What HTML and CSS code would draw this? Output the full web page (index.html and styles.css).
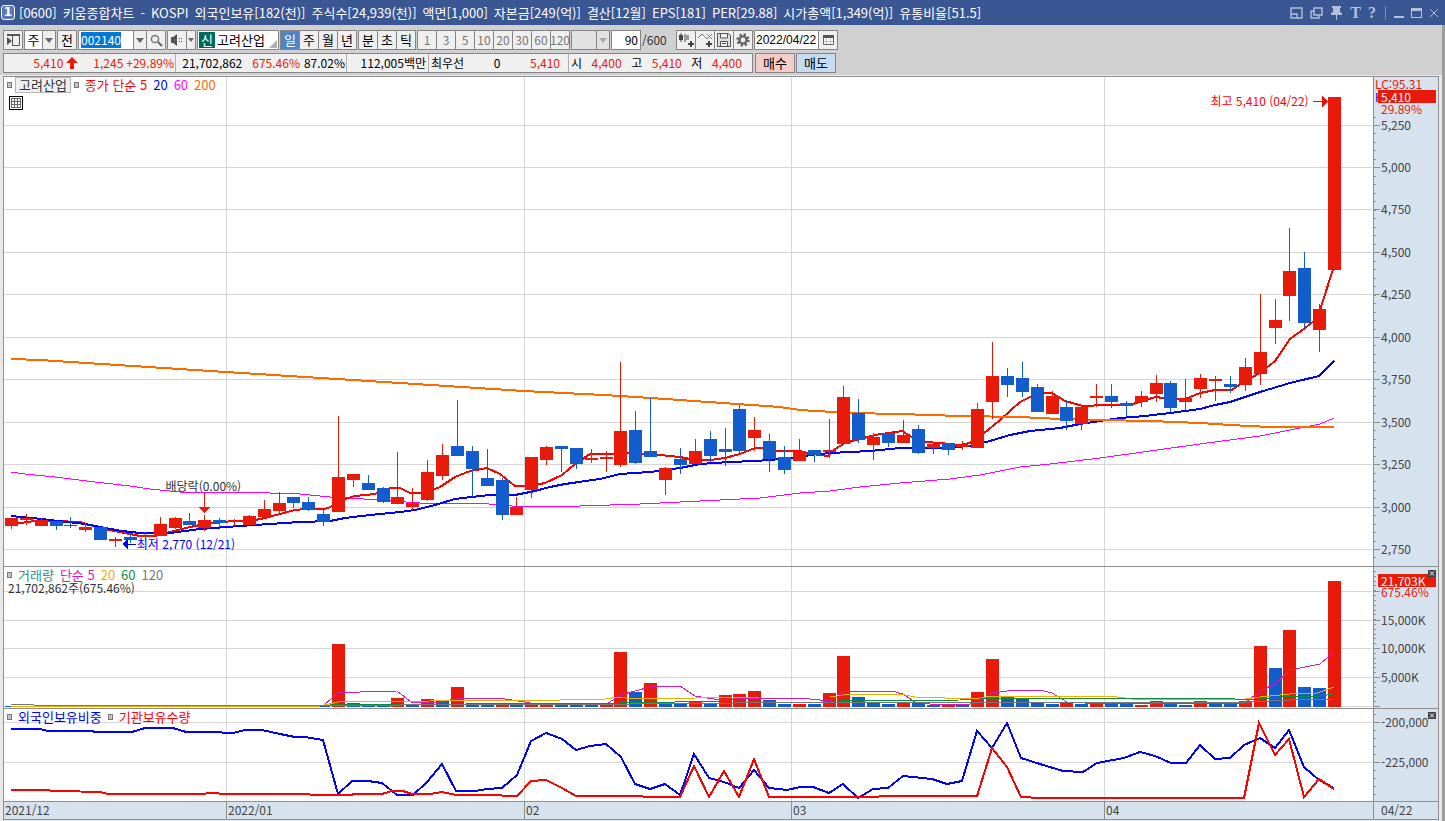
FILE: index.html
```html
<!DOCTYPE html>
<html lang="ko">
<head>
<meta charset="utf-8">
<title>[0600] 키움종합차트</title>
<link rel="stylesheet" href="styles.css">
</head>
<body>
<header class="titlebar">
  <span class="badge">1</span>
  <h1 class="title"><span>[0600]</span> <span>키움종합차트</span> <span>-</span> <span>KOSPI</span> <span>외국인보유[182(천)]</span> <span>주식수[24,939(천)]</span> <span>액면[1,000]</span> <span>자본금[249(억)]</span> <span>결산[12월]</span> <span>EPS[181]</span> <span>PER[29.88]</span> <span>시가총액[1,349(억)]</span> <span>유통비율[51.5]</span></h1>
  <div class="winctl">
    <button aria-label="축소"><svg width="13" height="12" viewBox="0 0 13 12"><path d="M1 1h11v10H7V7H1z M1 7v4h6" fill="none" stroke="currentColor" stroke-width="1.4"/></svg></button>
    <button aria-label="복제"><svg width="13" height="12" viewBox="0 0 13 12"><path d="M4 1h8v7H4z M4 4H1v7h8V8" fill="none" stroke="currentColor" stroke-width="1.4"/></svg></button>
    <button aria-label="고정"><svg width="13" height="14" viewBox="0 0 13 14"><path d="M2 0h9v2h-1v4l2 1v2H7v5H6V9H1V7l2-1V2H2z" fill="currentColor"/></svg></button>
    <button class="serif" aria-label="글꼴">T</button>
    <button class="serif" aria-label="도움말">?</button>
    <i class="bar"></i>
    <button aria-label="최소화"><svg width="11" height="12" viewBox="0 0 11 12"><path d="M1 9h10v2H1z" fill="currentColor"/></svg></button>
    <button aria-label="최대화"><svg width="11" height="12" viewBox="0 0 11 12"><path d="M0 1h11v10H0zM1 4v6h9V4z" fill="currentColor" fill-rule="evenodd"/></svg></button>
    <button aria-label="닫기"><svg width="11" height="12" viewBox="0 0 11 12"><path d="M1 2l8 8M9 2l-8 8" stroke="currentColor"/></svg></button>
  </div>
</header>
<main class="workspace">
  <section class="tools">
    <div class="toolbar">
      <div class="group"><button class="cell" aria-label="패널"><svg width="15" height="14" viewBox="0 0 15 14"><path d="M6.500 1v12M1 1.500h12.500v11H6" fill="none" stroke="#555"/><path d="M1 1h13v2H1zM1 4l5 4-5 4z" fill="#555"/></svg></button></div>
      <div class="group"><button class="cell plain">주</button><button class="cell arrow" aria-label="주 선택"></button></div>
      <div class="group"><button class="cell">전</button></div>
      <div class="group"><input class="code" id="code" value="002140" aria-label="종목코드"><button class="cell arrow" aria-label="종목 목록"></button><button class="cell" aria-label="검색"><svg width="13" height="13" viewBox="0 0 13 13"><circle cx="5" cy="5" r="3.6" fill="none" stroke="#777" stroke-width="1.5"/><path d="M8 8l4 4" stroke="#666" stroke-width="2"/></svg></button></div>
      <div class="group"><button class="cell" aria-label="소리"><svg width="14" height="12" viewBox="0 0 14 12"><path d="M1 3h2l4-3v12L3 9H1z" fill="#555"/><path d="M9 4h1v1H9zM11 4h1v1h-1zM9 7h1v1H9zM11 7h1v1h-1z" fill="#555"/></svg></button><button class="cell arrow slim" aria-label="소리 설정"></button></div>
      <div class="group stock"><b>신</b><span>고려산업</span></div>
      <div class="group"><button class="cell on">일</button><button class="cell">주</button><button class="cell">월</button><button class="cell">년</button></div>
      <div class="group"><button class="cell">분</button><button class="cell">초</button><button class="cell">틱</button></div>
      <div class="group num"><button class="cell">1</button><button class="cell">3</button><button class="cell">5</button><button class="cell">10</button><button class="cell">20</button><button class="cell">30</button><button class="cell">60</button><button class="cell">120</button></div>
      <div class="group off"><button class="cell wide" disabled aria-label="간격"></button><button class="cell arrow" disabled aria-label="간격 선택"></button></div>
      <div class="group count"><input id="count" value="90" aria-label="봉 개수"></div><label class="total" for="count">/600</label>
      <div class="group"><button class="cell" aria-label="봉 추가"><svg width="15" height="14" viewBox="0 0 15 14"><path d="M2 0v9M6 1v8" stroke="#444"/><path d="M0 2h4v5H0z" fill="#444"/><path d="M6 2h4v5H6z" fill="#999"/><path d="M9 11h6M12 8v6" stroke="#444" stroke-width="2"/></svg></button><button class="cell" aria-label="지표 추가"><svg width="15" height="14" viewBox="0 0 15 14"><path d="M0 5l4-4 5 5 5-5M9 1l5 5" fill="none" stroke="#777"/><path d="M8 11h6M11 8v6" stroke="#444" stroke-width="2"/></svg></button><button class="cell" aria-label="저장"><svg width="14" height="14" viewBox="0 0 14 14"><path d="M.5.5h11l2 2v11H.5z" fill="#ddd" stroke="#555"/><path d="M3.500 1v4h7V1M3.500 13V8.500h7V13M5 10.500h4" fill="#eee" stroke="#555"/></svg></button><button class="cell" aria-label="설정"><svg width="14" height="14" viewBox="0 0 14 14"><circle cx="7" cy="7" r="5.4" fill="none" stroke="#666" stroke-width="2.6" stroke-dasharray="2.1 2.14"/><circle cx="7" cy="7" r="3.6" fill="none" stroke="#666" stroke-width="2.4"/></svg></button></div>
      <div class="group date"><input value="2022/04/22" aria-label="날짜"><button class="cell" aria-label="달력"><svg width="13" height="12" viewBox="0 0 13 12"><path d="M1.500 1.500h10v9h-10z" fill="#fff" stroke="#666"/><path d="M1 1h11v3H1z" fill="#555"/><path d="M4.500 4v6M8.500 4v6M2 7.500h9" stroke="#bbb"/></svg></button></div>
    </div>
    <div class="quote">
      <div class="strip">
        <div class="q q1"><span class="up">5,410</span><svg width="12" height="12" viewBox="0 0 12 12"><path d="M6 0l6 6H8v6H4V6H0z" fill="#e81a0a"/></svg><span class="up chg">1,245</span><span class="up">+29.89%</span></div>
        <div class="q q2"><span>21,702,862</span><span class="up">675.46%</span><span>87.02%</span></div>
        <div class="q q3"><span>112,005백만</span></div>
        <div class="q q4"><span>최우선</span><span>0</span><span class="up">5,410</span></div>
        <div class="q q5"><span>시</span><span class="up">4,400</span><span>고</span><span class="up">5,410</span><span>저</span><span class="up">4,400</span></div>
      </div>
      <button class="order buy">매수</button><button class="order sell">매도</button>
    </div>
  </section>
  <section class="chart">
    <div class="panel" id="price">
      <div class="legend"><i></i><button class="name">고려산업</button><i></i><span class="c-red">종가 단순 5</span><span class="c-blue">20</span><span class="c-mag">60</span><span class="c-org">200</span></div>
      <button class="gridbtn" aria-label="표 보기"><svg width="10" height="10" viewBox="0 0 10 10"><path d="M0 .5h10M0 3.500h10M0 6.500h10M0 9.500h10M.5 0v10M3.500 0v10M6.500 0v10M9.500 0v10" stroke="#666"/></svg></button>
      <span class="note high">최고 5,410 (04/22)</span>
      <span class="note div">배당락(0.00%)</span>
      <span class="note low">최저 2,770 (12/21)</span>
    </div>
    <div class="axis" id="priceAxis"><span class="lc">LC:95.31</span><span class="hh">H</span><span class="tag">5,410</span><span class="rate">29.89%</span></div>
    <div class="panel line" id="volume">
      <div class="legend"><i></i><span class="c-teal">거래량</span><span class="c-pink">단순 5</span><span class="c-yel">20</span><span class="c-grn">60</span><span class="c-gry">120</span></div>
      <p class="sub">21,702,862주(675.46%)</p>
    </div>
    <div class="axis line" id="volumeAxis"><button class="x" aria-label="거래량 닫기"><svg width="8" height="7" viewBox="0 0 8 7"><path d="M2 1.500l4 4M6 1.500l-4 4" stroke="#fff"/></svg></button><span class="tag vtag">21,703K</span><span class="rate vrate">675.46%</span></div>
    <div class="panel line" id="holding">
      <div class="legend"><i></i><span class="c-blue">외국인보유비중</span><i></i><span class="c-red">기관보유수량</span></div>
    </div>
    <div class="axis line" id="holdingAxis"><button class="x" aria-label="보유 닫기"><svg width="8" height="7" viewBox="0 0 8 7"><path d="M2 1.500l4 4M6 1.500l-4 4" stroke="#fff"/></svg></button></div>
    <div class="dates line" id="dates"></div>
    <div class="today line">04/22</div>
  </section>
</main>
<script src="chart.js"></script>
</body>
</html>
```

FILE: styles.css
```css
* { box-sizing: border-box; }
body {
  margin: 0; height: 100vh; overflow: hidden;
  display: flex; flex-direction: column;
  font: 13px/16px "Noto Sans CJK KR", sans-serif;
  color: #000; background: #e8e8e8;
}
button, input { font: inherit; color: inherit; margin: 0; padding: 0; border: 0; border-radius: 0; outline: 0; }
button { background: none; }

.titlebar { height: 25px; flex: none; background: #3a5693; color: #fff; display: flex; align-items: center; padding: 0 5px 0 1px; }
.badge { width: 14px; height: 15px; border: 1px solid #fff; border-radius: 3px; background: #5c78b6; font: bold 12px/13px "DejaVu Sans", sans-serif; text-align: center; }
.title { margin: 0 0 0 4px; font: inherit; line-height: 20px; flex: 1; white-space: nowrap; display: flex; gap: 6px; }
.winctl { display: flex; align-items: center; gap: 7px; color: #b4c0da; }
.winctl button { height: 16px; display: flex; align-items: center; justify-content: center; }
.winctl .serif { font: bold 16px/16px "Liberation Serif", serif; }
.bar { width: 1px; height: 14px; background: #7f8fae; margin: 0 0 0 2px; }

.workspace { flex: 1; min-height: 0; display: flex; flex-direction: column; border-right: 3px solid #9c9c9c; padding-bottom: 1px; }
.tools { background: #d0d0d0; padding: 5px 3px 2px; display: flex; flex-direction: column; gap: 3px; margin-bottom: 1px; }
.toolbar { display: flex; gap: 1px; height: 20px; }
.group { display: flex; height: 20px; border: 1px solid #858585; background: #858585; gap: 1px; }
.cell { width: 18px; background: #efefef; display: flex; align-items: center; justify-content: center; white-space: nowrap; }
.plain { background: #fff; width: 17px; }
.arrow { width: 12px; }
.arrow::after { content: ""; border: 4px solid transparent; border-top: 5px solid #666; border-bottom: 0; }
.slim { width: 8px; }
.slim::after { border-width: 4px 3px 0; }
.on { background: #4f84c6; color: #fff; }
.code { width: 54px; padding: 0 2px; background: #fff; font-size: 12px; }
.code::selection { background: #0078d7; color: #fff; }
.stock { background: #fff; width: 82px; position: relative; gap: 2px; line-height: 18px; }
.stock b { margin: 1px 0 1px 1px; width: 16px; line-height: 16px; text-align: center; font-weight: normal; color: #fff; background: #00685e; }
.stock::after { content: ""; position: absolute; right: 1px; bottom: 1px; border-left: 8px solid transparent; border-bottom: 8px solid #b0b0b0; }
.num { color: #777; font-size: 12px; }
.off .cell { background: #e2e2e2; }
.off .wide { width: 24px; }
.off .arrow::after { border-top-color: #aaa; }
.count input { width: 28px; text-align: right; background: #fff; padding-right: 2px; font-size: 12px; }
.total { line-height: 20px; color: #333; width: 33px; font-size: 12px; }
.date input { width: 63px; background: #fff; padding-left: 1px; font: 12px "Liberation Sans", sans-serif; }

.quote { display: flex; gap: 2px; height: 20px; }
.strip { display: flex; width: 750px; border: 1px solid #858585; background: #f0f0f0; line-height: 18px; font-size: 12px; }
.q { display: flex; align-items: center; border-right: 1px solid #b0b0b0; white-space: nowrap; }
.q:last-child { border: 0; }
.up { color: #e81a0a; }
.q1 { width: 172px; padding-right: 1px; justify-content: flex-end; gap: 3px; }
.chg { margin-left: 12px; }
.q2 { width: 171px; justify-content: flex-end; gap: 4px; padding-right: 1px; }
.q2 span:first-child { margin-right: 6px; }
.q3 { width: 82px; justify-content: flex-end; padding-right: 2px; }
.q4 { width: 140px; justify-content: space-between; padding: 0 8px 0 2px; }
.q5 { flex: 1; justify-content: space-between; padding: 0 10px 0 2px; }
.order { width: 40px; border: 1px solid #858585; }
.buy { background: #f5cdc8; }
.sell { background: #c5dcf2; margin-left: -1px; }

.chart {
  flex: 1; min-height: 0; margin: 0 3px; border: 1px solid #8f8f8f;
  display: grid; grid-template-columns: minmax(0, 1fr) 65px;
  grid-template-rows: 489fr 142fr 93fr 18px; background: #fff;
}
.panel, .axis, .dates { position: relative; min-height: 0; overflow: hidden; }
.axis, .dates, .today { background: #d7e2ef; color: #444; font-size: 12px; }
.axis, .today { border-left: 1px solid #8f8f8f; }
.line { border-top: 1px solid #8f8f8f; }
.plot { position: absolute; left: 0; top: 0; width: 100%; height: 100%; display: block; }
.legend { position: relative; display: flex; align-items: center; gap: 6px; padding-left: 3px; height: 16px; white-space: nowrap; }
.legend i { width: 5px; height: 6px; border: 1px solid #777; background: #c4c4c4; }
.name { border: 1px solid #b5b5b5; background: #f0f0f0; height: 16px; line-height: 14px; padding: 0 3px; margin: 0 -3px; color: #333; }
.gridbtn { position: relative; display: flex; margin: 3px 0 0 5px; width: 14px; height: 14px; border: 1px solid #000; background: #fff; align-items: center; justify-content: center; }
.sub { position: relative; margin: -3px 0 0 4px; color: #333; font-size: 12px; }
.c-red { color: #f00; } .c-blue { color: #00f; } .c-mag { color: #f0f; } .c-org { color: #ff6a00; }
.c-teal { color: #2f8f8f; } .c-pink { color: #d81bb0; } .c-yel { color: #f2ae00; } .c-grn { color: #0a8f3c; } .c-gry { color: #777; }
.note { position: absolute; white-space: nowrap; transform: translateY(-50%); font-size: 12px; }
.high { right: 4.7%; top: 4.9%; color: #f00; }
.div { left: 11.8%; top: 83.6%; color: #333; }
.low { left: 9.7%; top: 95.4%; color: #00f; }

.lab { position: absolute; left: 7px; transform: translateY(-50%); }
.lc, .hh, .rate, .tag { position: absolute; left: 1px; }
.lc { top: -1px; color: #e81a0a; }
.hh { top: 12px; color: #00c; }
.tag { left: 4px; top: 13px; width: 58px; height: 13px; line-height: 13px; padding-left: 3px; background: #e81a0a; color: #fff; z-index: 1; }
.rate { left: 7px; top: 24px; color: #e81a0a; }
.vtag { top: 7px; }
.vrate { top: 17px; }
.x { position: absolute; right: 2px; top: 3px; width: 8px; height: 7px; background: #444; z-index: 2; display: flex; }
.month { position: absolute; top: 0; height: 100%; border-left: 1px solid #8f8f8f; padding-left: 1px; }
.month:first-child { border: 0; }
.today { padding-left: 7px; }
```

FILE: chart.js
```js
const LEFT = 4, WIDTH = 1369, FIRST = 11.5, STEP = 1323 / 89;
const UP = '#e81a0a', DOWN = '#125ccb';
const cx = i => Math.floor(FIRST + i * STEP) + 0.5;

// colour, high, body top, body bottom, low
const candles = `R518,518,526,529 R514,518,520,525 R518,520,526,526 B521,521,526,530 B517,525,526,528 R523,527,530,532
B527,527,540,540 R537,539,541,547 B534,537,540,543 R532,536,537,541 R517,524,536,536 R517,518,528,529 B513,521,525,525
R515,520,528,531 B518,520,523,527 R519,521,522,526 R515,516,525,525 R500,509,517,517 R492,503,511,515 B497,497,503,508
B497,502,510,511 B510,514,522,526 R416,477,512,512 R474,474,480,487 B475,483,490,490 B487,488,502,503 R452,497,504,504
R488,503,507,510 R460,472,500,501 R444,455,476,480 B400,446,456,456 B446,451,469,497 B449,478,486,486 B478,480,515,520
R497,507,515,515 R457,457,490,498 R446,447,460,465 B446,446,449,472 B448,448,464,469 R449,458,460,463 R451,457,459,472
R362,431,465,467 B411,430,463,464 B398,451,457,457 R467,468,480,495 B448,459,465,474 R439,451,464,464 B431,439,456,462
B428,449,452,466 B405,409,451,454 R417,430,438,451 B434,441,459,472 B446,457,470,474 R439,451,461,461 B450,450,455,462
R419,450,452,458 R386,397,444,444 B399,413,440,443 R433,437,445,460 B433,433,443,447 R420,435,443,443 B425,429,453,454
R444,444,448,454 B443,443,450,455 R441,445,447,450 R403,409,448,448 R342,376,402,419 B368,376,385,397 B362,378,392,397
B384,387,412,412 R391,396,414,414 B400,407,421,430 R407,407,424,430 R384,396,398,407 B384,396,402,408 B401,403,406,416
R391,396,402,407 R375,383,394,402 B381,383,408,412 R379,398,402,410 R374,378,389,398 R376,379,381,401 B376,384,387,393
R358,367,385,391 R294,352,374,385 R299,320,328,344 R228,271,296,321 B252,268,323,327 R304,309,330,352 R97,97,270,270`.split(/\s+/);

const volumes = `B706 B706 B706 B706 B706 B706 B706 B706 B706 B706 B706 B706 B706 B706 B706 B706 B706 B706 B706 B706 B706 B706
R644 B703 B705 B705 R698 B705 R699 B700 R687 B703 B703 R703 B705 R703 R703 B705 B705 B705 R705 R652 B692 R683 B704 B704
R701 B704 R695 R694 R691 B700 B704 R704 B704 R693 R656 B697 B702 B704 R703 B703 B705 R705 B705 R692 R659 B697 B699 B703
B704 R703 B704 R703 B704 B704 R705 R701 B704 B705 R701 B704 B704 R701 R646 B668 R630 B687 B688 R581`.split(/\s+/);

const lines = {
  ma60: '11,472 25,474 55,477 95,482 130,486 150,489 180,492 240,492 300,494 330,497 350,498 392,501 420,503 478,503 500,505 523,507 540,506 580,506 640,504 700,501 760,498 800,493 830,491 860,487 900,483 950,479 980,475 1000,471 1020,467 1050,464 1100,458 1150,451 1200,444 1260,436 1290,430 1310,426 1320,424 1334,418',
  ma5: '11,524 20,523 35,521 55,521 80,522 100,528 125,533 140,536 155,536 170,532 190,527 205,524 215,523 232,521 250,521 265,518 280,514 295,510 305,509 325,509 335,505 345,499 355,496 375,494 390,488 400,488 410,493 425,493 440,487 455,477 470,471 487,468 500,474 515,486 530,486 545,483 562,475 575,464 590,454 610,454 625,453 660,455 680,457 695,460 710,460 725,458 740,454 755,448 765,448 778,451 800,451 812,454 828,456 835,449 845,443 860,439 875,435 902,431 912,437 925,442 940,443 960,445 970,443 983,434 1000,420 1020,402 1030,397 1042,393 1052,393 1065,401 1083,406 1105,405 1130,405 1145,400 1156,397 1170,399 1185,399 1200,393 1215,390 1232,390 1245,381 1260,373 1275,361 1290,339 1305,328 1315,320 1320,310 1334,266',
  ma20: '11,516 32,518 50,520 85,524 105,528 122,531 140,533 170,533 200,529 240,526 270,524 300,522 330,521 345,518 370,515 400,512 415,510 435,505 455,499 480,496 490,495 515,495 535,491 550,487 565,484 600,479 620,474 650,472 680,468 700,464 730,462 755,461 795,458 810,455 830,453 870,451 900,448 940,448 970,446 990,441 1010,435 1030,431 1060,428 1080,424 1100,421 1120,418 1145,416 1170,413 1200,409 1215,405 1230,402 1260,392 1290,383 1319,376 1334,361',
  ma200: '11,359 40,360 226,372 400,383 524,391 604,395 651,398 780,407 800,410 850,413 900,414 960,416 1020,417 1060,419 1100,420 1150,421 1200,423 1230,425 1270,427 1334,427',
  v120: '11,704 33,704 35,706 400,705 630,704 840,702 1250,702 1290,700 1334,699',
  v20: '11,706 320,706 338,702 430,701 455,700 560,700 570,699 605,699 620,697 632,699 760,697 830,697 850,694 900,694 915,697 945,698 980,698 992,696 1040,696 1117,697 1140,700 1245,699 1260,697 1290,694 1317,693 1334,687',
  v60: '330,705 620,703 730,701 840,701 960,700 1005,698 1220,698 1250,700 1290,696 1320,696 1334,694',
  v5: '324,705 338,693 360,692 397,691 411,702 440,702 460,698 490,698 505,699 525,702 535,704 607,704 620,695 650,687 680,686 695,696 720,700 750,698 800,698 830,701 843,692 855,691 892,691 903,694 915,702 930,704 970,704 980,702 992,693 1015,690 1040,690 1052,693 1067,702 1085,703 1245,703 1260,691 1275,684 1290,670 1305,667 1320,664 1334,652',
  foreign: '11,729 40,729 48,731 92,731 95,732 132,732 145,728 173,728 186,732 210,732 233,733 245,730 262,730 280,734 295,737 305,737 323,740 338,794 352,781 368,781 382,783 397,795 413,795 427,782 442,764 456,791 475,791 487,789 502,788 517,775 531,741 546,733 562,739 576,750 590,746 606,744 621,757 635,784 650,789 665,784 680,795 694,754 709,778 724,782 739,788 754,770 769,788 787,790 800,787 813,787 829,793 843,784 858,798 873,789 888,788 903,776 932,779 947,784 962,781 977,731 992,748 1007,723 1021,758 1040,764 1063,771 1083,772 1097,763 1124,758 1140,752 1155,756 1171,763 1186,763 1200,745 1215,759 1230,758 1244,745 1260,738 1275,748 1289,730 1304,767 1319,780 1334,788',
  institution: '11,790 40,790 60,791 100,792 108,794 200,794 212,793 225,794 308,794 312,795 350,795 355,794 382,794 392,791 403,791 412,794 430,794 442,792 456,795 487,795 517,796 531,781 546,780 562,788 576,796 605,796 680,797 694,766 709,797 724,771 739,797 754,759 769,797 858,797 900,796 977,796 992,748 1007,767 1021,797 1040,798 1244,798 1259,723 1275,755 1289,739 1304,797 1319,779 1334,789'
};

const rect = (x, y, w, h, fill) => `<rect x="${x}" y="${y}" width="${w}" height="${h}" fill="${fill}"/>`;
const poly = (key, colour, width) => `<polyline points="${lines[key]}" fill="none" stroke="${colour}" stroke-width="${width}" vector-effect="non-scaling-stroke"/>`;
const months = [[226, '2022/01'], [524, '02'], [791, '03'], [1104, '04']];

function plot(id, left, top, width, height, shapes) {
  document.getElementById(id).insertAdjacentHTML('afterbegin',
    `<svg class="plot" viewBox="${left} ${top} ${width} ${height}" preserveAspectRatio="none" shape-rendering="crispEdges">${shapes}</svg>`);
}
function grid(top, height, rows) {
  return months.map(m => rect(m[0], top, 1, height, '#d6d6d6')).join('') +
    rows.map(y => rect(LEFT, y, WIDTH - 1, 1, '#d6d6d6')).join('');
}
function axis(id, top, height, rows, minor) {
  const ticks = minor.map(y => rect(1374, Math.round(y), 2, 1, '#8f8f8f')).join('') +
    rows.map(r => rect(1374, r[0], 6, 1, '#8f8f8f')).join('');
  plot(id, 1374, top, 64, height, ticks);
  document.getElementById(id).insertAdjacentHTML('beforeend', rows.filter(r => r[1]).map(r =>
    `<span class="lab" style="top:${(r[0] - top) / height * 100}%">${r[1]}</span>`).join(''));
}
const range = (from, to, step) => { const out = []; for (let y = from; y < to; y += step) out.push(y); return out; };

const priceRows = [125, 167, 209, 252, 294, 337, 379, 422, 464, 507, 549];
plot('price', LEFT, 77, WIDTH, 489, grid(77, 489, priceRows) +
  poly('ma60', '#f0f', 1) + poly('ma5', '#f00', 2) + poly('ma20', '#00f', 2) + poly('ma200', '#ff6a00', 2) +
  candles.map((c, i) => {
    const colour = c[0] === 'R' ? UP : DOWN, [h, t, b, l] = c.slice(1).split(',').map(Number), x = cx(i) - 0.5;
    return rect(x, h, 1, l - h, colour) + rect(x - 6, t, 13, b - t, colour);
  }).join('') +
  '<path d="M1313 101h9v-5l6 5-6 6v-5h-9z" fill="#f00"/>' +
  '<path d="M204 493h1v14h5l-5.500 6-5.500-6h5z" fill="#e81a0a"/>' +
  '<path d="M122 544l6-5v5h8v1h-8v5z" fill="#00f"/>');
axis('priceAxis', 77, 489, priceRows.map((y, i) => [y, (5250 - i * 250).toLocaleString('en-US')]), range(116.5, 566, 8.48));

const volumeRows = [591, 620, 648, 677, 706];
plot('volume', LEFT, 567, WIDTH, 141, grid(567, 141, volumeRows) +
  volumes.map((v, i) => rect(cx(i) - 6.5, +v.slice(1), 13, 707 - v.slice(1), v[0] === 'R' ? UP : DOWN)).join('') +
  poly('v5', '#d81bb0', 1) + poly('v20', '#f2ae00', 1) + poly('v60', '#0a8f3c', 1) + poly('v120', '#777', 1));
axis('volumeAxis', 567, 141, volumeRows.map((y, i) => [y, ['', '15,000K', '10,000K', '5,000K', ''][i]]), range(571, 706, 4.82));

plot('holding', LEFT, 709, WIDTH, 92, grid(709, 92, [722, 762]) + poly('foreign', '#00f', 2) + poly('institution', '#f00', 2));
axis('holdingAxis', 709, 92, [[722, '-200,000'], [762, '-225,000']], range(714, 800, 8));

document.getElementById('dates').innerHTML = [[4, '2021/12'], ...months].map(m =>
  `<span class="month" style="left:${(m[0] - LEFT) / WIDTH * 100}%">${m[1]}</span>`).join('');

const code = document.getElementById('code');
code.focus();
code.select();
```
